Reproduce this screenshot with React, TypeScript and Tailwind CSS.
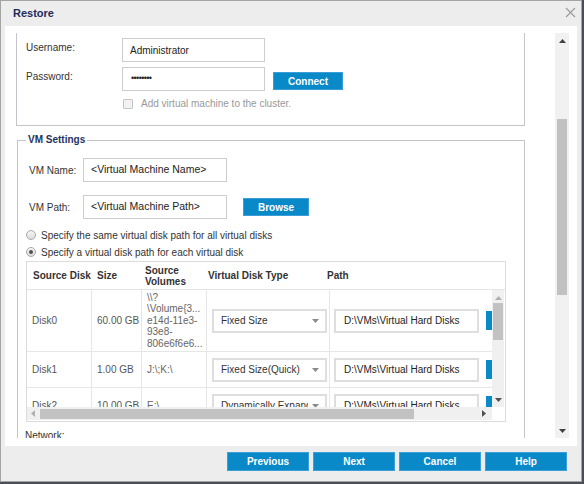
import React from "react";

const Caret = () => (
  <svg width="7" height="4" viewBox="0 0 7 4" className="shrink-0">
    <path d="M0 0 L7 0 L3.5 4 Z" fill="#8a8a8a" />
  </svg>
);

const Tri = ({ dir, color }: { dir: "up" | "down" | "left" | "right"; color: string }) => {
  const d =
    dir === "up"
      ? "M0 4 L7 4 L3.5 0 Z"
      : dir === "down"
      ? "M0 0 L7 0 L3.5 4 Z"
      : dir === "left"
      ? "M4 0 L4 7 L0 3.5 Z"
      : "M0 0 L0 7 L4 3.5 Z";
  const vertical = dir === "up" || dir === "down";
  return (
    <svg width={vertical ? 7 : 4} height={vertical ? 4 : 7} viewBox={vertical ? "0 0 7 4" : "0 0 4 7"}>
      <path d={d} fill={color} />
    </svg>
  );
};

const Radio = ({ checked }: { checked?: boolean }) => (
  <div className="w-[10px] h-[10px] rounded-full border border-[#a8a8a8] bg-gradient-to-b from-[#f7f7f7] to-[#dcdcdc] flex items-center justify-center shrink-0">
    {checked && <div className="w-[4px] h-[4px] rounded-full bg-[#505050]" />}
  </div>
);

const BlueBtn = ({ label, w, h }: { label: string; w: string; h: string }) => (
  <div className={`${w} ${h} bg-[#0a89c9] border border-[#3c9ed6] text-white font-bold text-[10px] flex items-center justify-center shrink-0`}>
    {label}
  </div>
);

type Row = { disk: string; size: string; vols: string[]; type: string; h: string };

const rows: Row[] = [
  { disk: "Disk0", size: "60.00 GB", vols: ["\\\\?", "\\Volume{3...", "e14d-11e3-", "93e8-", "806e6f6e6..."], type: "Fixed Size", h: "h-[62px]" },
  { disk: "Disk1", size: "1.00 GB", vols: ["J:\\;K:\\"], type: "Fixed Size(Quick)", h: "h-[36px]" },
  { disk: "Disk2", size: "10.00 GB", vols: ["E:\\"], type: "Dynamically Expanding", h: "h-[36px]" },
];

export default function App() {
  return (
    <div className="w-[584px] h-[484px] bg-[#4a4e57] font-['Liberation_Sans',Arial,sans-serif]">
      <div className="w-[582px] h-[482px] bg-[#ededed] border border-[#a4a4a4] flex flex-col">
        {/* Title bar */}
        <div className="h-[25px] flex items-center justify-between pl-[12px] pr-[4px] shrink-0">
          <span className="text-[11px] font-bold text-[#1d2c5a]">Restore</span>
          <svg width="11" height="11" viewBox="0 0 11 11" className="mr-[1px] mb-[3px]">
            <path d="M1 1 L10 10 M10 1 L1 10" stroke="#9a9a9a" strokeWidth="1.1" />
          </svg>
        </div>

        {/* White panel */}
        <div className="mx-[4px] h-[420px] bg-white pt-[7px] pb-[8px] flex shrink-0">
          {/* Viewport */}
          <div className="w-[550px] h-[405px] overflow-hidden text-[10px] text-[#333]">
            {/* Top box (scrolled partially out) */}
            <div className="ml-[11px] w-[509px] h-[93px] border-l border-r border-b border-[#c4c4cc] pl-[9px] pt-[5px]">
              <div className="flex items-start">
                <div className="w-[96px] pt-[2px]">Username:</div>
                <div className="w-[143px] h-[24px] border border-[#cccccc] flex items-center pl-[7px] text-[10px] text-[#222]">
                  Administrator
                </div>
              </div>
              <div className="flex items-start mt-[5px]">
                <div className="w-[96px] pt-[2px]">Password:</div>
                <div className="w-[143px] h-[24px] border border-[#cccccc] flex items-center pl-[8px] text-[#222] text-[9px] tracking-[-0.6px]">
                  ••••••••
                </div>
                <div className="ml-[8px] mt-[5px]">
                  <BlueBtn label="Connect" w="w-[70px]" h="h-[18px]" />
                </div>
              </div>
              <div className="flex items-center mt-[5px] pl-[97px]">
                <div className="w-[10px] h-[10px] border border-[#c4c4c4] bg-[#f2f2f2] rounded-[1px]" />
                <span className="ml-[8px] text-[#999]">Add virtual machine to the cluster.</span>
              </div>
            </div>

            {/* VM Settings */}
            <fieldset className="ml-[12px] mt-[8px] w-[508px] border border-[#c4c4cc] h-[320px]">
              <legend className="ml-[8px] px-[2px] font-bold text-[#1f3463] leading-[12px]">VM Settings</legend>
              <div className="flex items-center mt-[12px] pl-[11px]">
                <div className="w-[54px]">VM Name:</div>
                <div className="w-[144px] h-[24px] border border-[#cccccc] flex items-center pl-[7px] text-[#222] text-[10.5px]">
                  &lt;Virtual Machine Name&gt;
                </div>
              </div>
              <div className="flex items-center mt-[13px] pl-[11px]">
                <div className="w-[54px]">VM Path:</div>
                <div className="w-[144px] h-[24px] border border-[#cccccc] flex items-center pl-[7px] text-[#222] text-[10.5px]">
                  &lt;Virtual Machine Path&gt;
                </div>
                <div className="ml-[16px]">
                  <BlueBtn label="Browse" w="w-[66px]" h="h-[18px]" />
                </div>
              </div>
              <div className="flex items-center mt-[10px] pl-[8px] h-[12px]">
                <Radio />
                <span className="ml-[5px]">Specify the same virtual disk path for all virtual disks</span>
              </div>
              <div className="flex items-center mt-[5px] pl-[8px] h-[12px]">
                <Radio checked />
                <span className="ml-[5px]">Specify a virtual disk path for each virtual disk</span>
              </div>

              {/* Table */}
              <div className="ml-[8px] mt-[3px] w-[480px] h-[161px] border border-[#dcdcdc] flex flex-col">
                <div className="h-[28px] border-b border-[#e4e4e4] flex items-center font-bold text-[#333] shrink-0">
                  <div className="w-[65px] pl-[6px]">Source Disk</div>
                  <div className="w-[50px] pl-[5px]">Size</div>
                  <div className="w-[64px] pl-[3px] leading-[11px]">
                    Source
                    <br />
                    Volumes
                  </div>
                  <div className="w-[116px] pl-[2px]">Virtual Disk Type</div>
                  <div className="pl-[5px]">Path</div>
                </div>
                <div className="flex h-[117px] shrink-0">
                  <div className="w-[465px] overflow-hidden">
                    {rows.map((r) => (
                      <div key={r.disk} className={`${r.h} flex border-b border-[#e6e6e6] text-[#555] w-[600px] shrink-0`}>
                        <div className="w-[65px] border-r border-[#e6e6e6] pl-[5px] flex items-center shrink-0">{r.disk}</div>
                        <div className="w-[50px] border-r border-[#e6e6e6] pl-[5px] flex items-center shrink-0">{r.size}</div>
                        <div className="w-[65px] border-r border-[#e6e6e6] pl-[5px] flex flex-col justify-center leading-[11.5px] shrink-0 text-[#666]">
                          {r.vols.map((v, i) => (
                            <div key={i} className="whitespace-nowrap">{v}</div>
                          ))}
                        </div>
                        <div className="w-[123px] border-r border-[#e6e6e6] pl-[5px] flex items-center shrink-0">
                          <div className="w-[115px] h-[24px] border-2 border-[#dedede] flex items-center pl-[7px] pr-[6px] text-[#333] overflow-hidden">
                            <span className="flex-1 min-w-0 whitespace-nowrap overflow-hidden">{r.type}</span>
                            <span className="ml-[4px] flex"><Caret /></span>
                          </div>
                        </div>
                        <div className="pl-[4px] flex items-center shrink-0">
                          <div className="w-[145px] h-[24px] border-2 border-[#dedede] flex items-center pl-[8px] text-[#222] whitespace-nowrap">
                            D:\VMs\Virtual Hard Disks
                          </div>
                          <div className="ml-[7px] w-[50px] h-[19px] bg-[#0a89c9]" />
                        </div>
                      </div>
                    ))}
                  </div>
                  {/* table v scrollbar */}
                  <div className="w-[12px] bg-[#f0f0f0] flex flex-col items-center pt-[6px] pb-[5px]">
                    <Tri dir="up" color="#b0b0b0" />
                    <div className="mt-[3px] w-[10px] h-[37px] bg-[#c2c2c2]" />
                    <div className="flex-1" />
                    <Tri dir="down" color="#505050" />
                  </div>
                </div>
                {/* table h scrollbar */}
                <div className="flex h-[13px] shrink-0">
                  <div className="w-[465px] bg-[#f0f0f0] flex items-center pl-[4px] pr-[6px]">
                    <Tri dir="left" color="#b0b0b0" />
                    <div className="ml-[5px] w-[374px] h-[10px] bg-[#c2c2c2]" />
                    <div className="flex-1" />
                    <Tri dir="right" color="#505050" />
                  </div>
                  <div className="w-[12px] bg-white" />
                </div>
              </div>

              <div className="mt-[6px] pl-[7px]">Network:</div>
            </fieldset>
          </div>

          {/* Main scrollbar */}
          <div className="w-[14px] h-[405px] bg-[#f1f1f1] flex flex-col items-center pt-[6px] pb-[5px]">
            <Tri dir="up" color="#404040" />
            <div className="mt-[76px] w-[10px] h-[176px] bg-[#c1c1c1]" />
            <div className="flex-1" />
            <Tri dir="down" color="#404040" />
          </div>
        </div>

        {/* Footer */}
        <div className="flex justify-end gap-[4px] pt-[6px] pr-[14px]">
          <BlueBtn label="Previous" w="w-[82px]" h="h-[19px]" />
          <BlueBtn label="Next" w="w-[82px]" h="h-[19px]" />
          <BlueBtn label="Cancel" w="w-[82px]" h="h-[19px]" />
          <BlueBtn label="Help" w="w-[82px]" h="h-[19px]" />
        </div>
      </div>
    </div>
  );
}
